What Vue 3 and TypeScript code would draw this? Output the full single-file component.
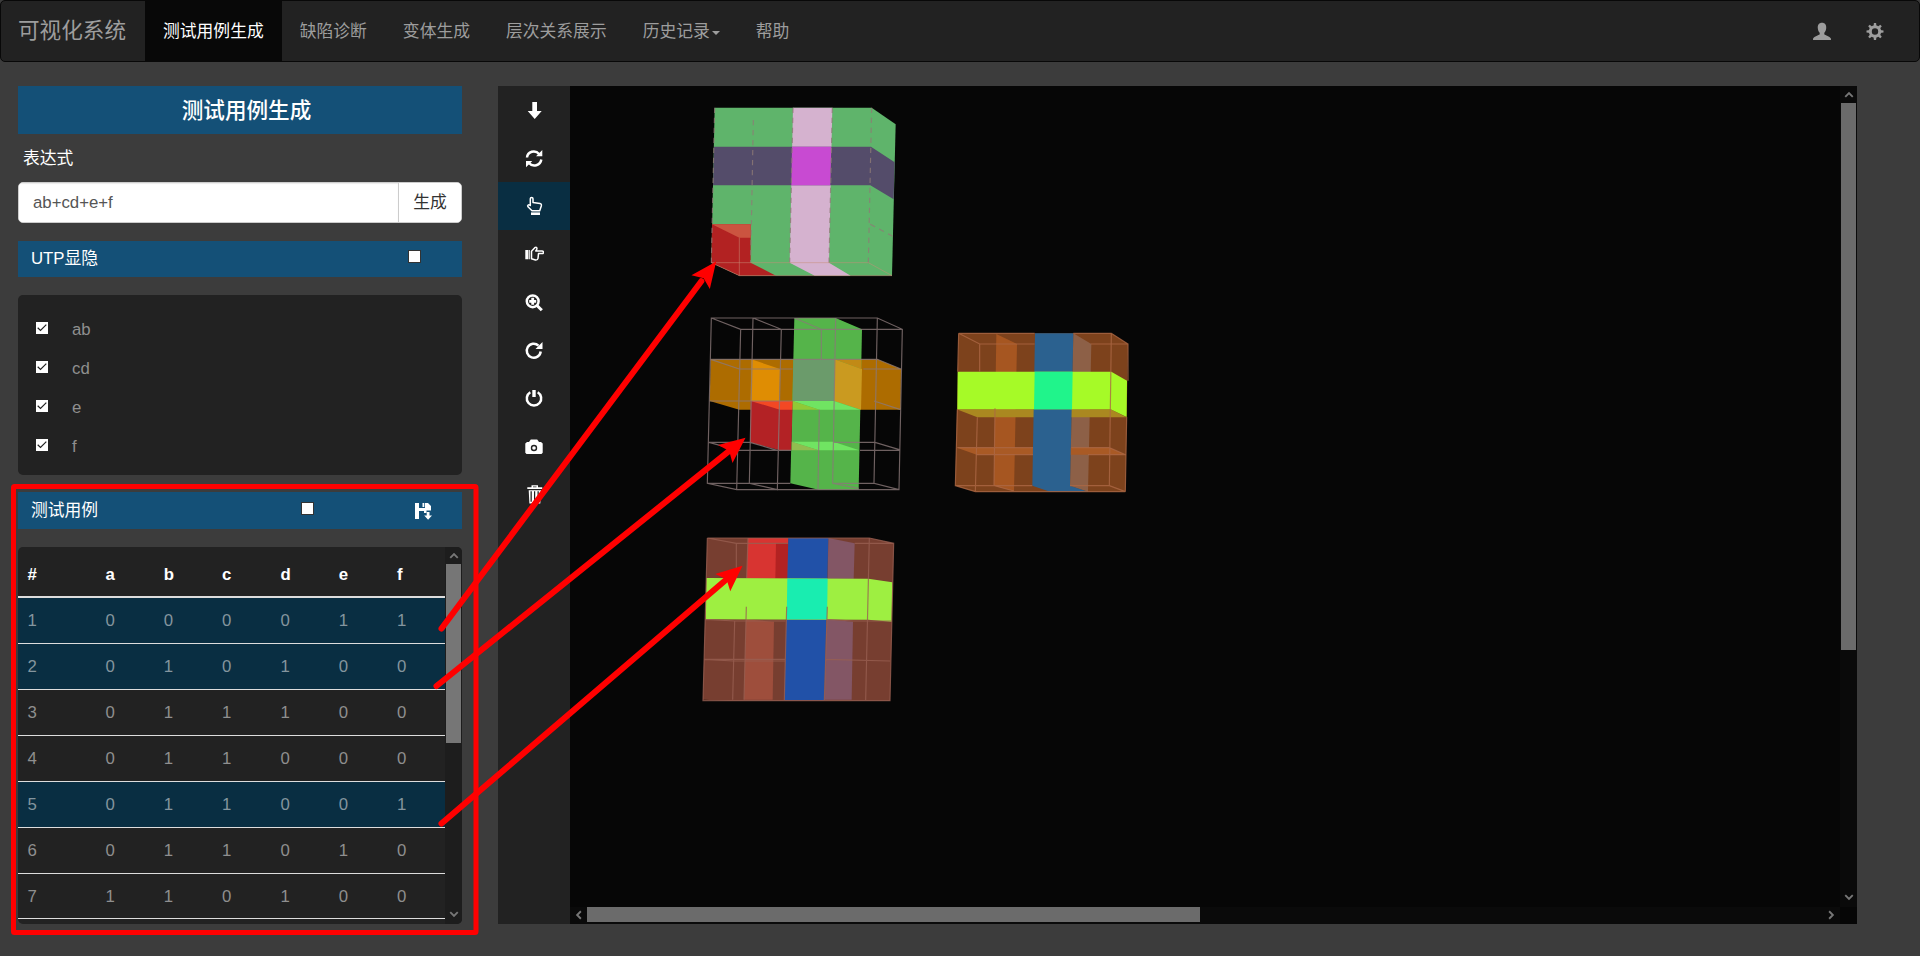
<script setup lang="ts">
import { ref } from 'vue'

interface Face { p: string; c: string }
interface Cube { id: string; x: number; y: number; faces: Face[]; lines: string; stroke: string; dash?: string }

const navItems = ['测试用例生成', '缺陷诊断', '变体生成', '层次关系展示', '历史记录', '帮助']
const terms = ref(['ab', 'cd', 'e', 'f'])
const columns = ['a', 'b', 'c', 'd', 'e', 'f']
const expression = ref('ab+cd+e+f')
const cases = [
  { id: 1, bits: '000011', on: true },
  { id: 2, bits: '010100', on: true },
  { id: 3, bits: '011100', on: false },
  { id: 4, bits: '011000', on: false },
  { id: 5, bits: '011001', on: true },
  { id: 6, bits: '011010', on: false },
  { id: 7, bits: '110100', on: false },
]
const tools = ['down', 'refresh', 'up-hand', 'right-hand', 'zoom', 'repeat', 'power', 'camera', 'trash']
const activeTool = 'up-hand'

// Faces are drawn back to front, three units per screen pixel.
const cubes: Cube[] = [
  {
    id: 'top', x: 690, y: 95, stroke: '#8f7a75', dash: '16 14',
    faces: [
      { p: '74,38 545,38 617,88 606,542 148,542 64,503', c: '#5fb46b' },
      { p: '309,38 427,38 417,503 482,542 374,542 299,503', c: '#d5b2cf' },
      { p: '72,155 543,155 614,202 611,313 541,271 69,271', c: '#544c6a' },
      { p: '306,155 424,155 421,271 304,271', c: '#c84ad2' },
      { p: '66,388 182,388 182,503 258,542 148,542 64,503', c: '#b22222' },
      { p: '66,388 182,388 182,428 148,428', c: '#cb5440' },
    ],
    lines: 'M74 38L64 503M190 75L182 503M309 38L299 503M427 38L417 503M545 38L535 505M541 388L608 424',
  },
  {
    id: 'middle', x: 690, y: 305, stroke: '#8a7878',
    faces: [
      { p: '62,163 562,163 633,192 632,314 148,314 59,288', c: '#ad6c00' },
      { p: '184,163 270,192 268,288 182,288', c: '#df8d03' },
      { p: '313,39 437,39 516,73 506,554 386,554 301,535', c: '#55b44a' },
      { p: '310,163 434,163 432,288 308,288', c: '#6b9b6b' },
      { p: '434,163 516,192 513,314 432,288', c: '#ca9a20' },
      { p: '434,163 514,163 514,192', c: '#c18a16' },
      { p: '182,288 308,288 304,436 270,436 180,412', c: '#b32225' },
      { p: '182,288 308,288 306,314 270,314', c: '#f34824' },
      { p: '308,288 432,288 511,314 388,314', c: '#70e462' },
      { p: '308,288 388,314 308,314', c: '#91c936' },
      { p: '305,410 430,410 508,436 386,436', c: '#70e462' },
      { p: '305,410 386,436 305,436', c: '#91bd50' },
    ],
    lines: 'M64 39H562L637 73L627 554H140L52 535ZM64 39L152 73H637M152 73L140 554M189 39L178 535L262 554L274 73L189 39M313 39L394 73V163M437 39L428 535L506 550M562 39L552 535L627 554M52 535H301M428 535H552M62 163H562L633 192H520M148 192H308M148 192L62 163M59 288H308M552 288L632 314M57 412H180L262 436M57 412L144 436H304M430 412H555L628 434M510 436H628M268 314L262 554M388 314L384 554',
  },
  {
    id: 'right', x: 940, y: 320, stroke: '#ac6845',
    faces: [
      { p: '56,40 514,40 564,72 556,515 106,515 46,497', c: '#7d421c' },
      { p: '169,42 231,72 222,513 162,497', c: '#a65621' },
      { p: '400,40 454,72 444,515 390,497', c: '#8d6047' },
      { p: '51,383 508,383 557,404 110,404', c: '#a95a25' },
      { p: '50,268 512,268 559,292 112,292', c: '#aa8820' },
      { p: '285,40 400,40 390,497 444,515 330,515 277,497', c: '#2b618f' },
      { p: '53,155 514,155 561,182 560,291 512,268 52,268', c: '#a6fa27' },
      { p: '284,155 398,155 396,268 282,268', c: '#20f48b' },
    ],
    lines: 'M56 40H284M400 40H514L564 72M56 40L53 155M52 268L46 497H277M390 497H508L556 515H106L46 497M56 40L119 72H284M119 72V155M112 292L106 515M165 265L162 497L222 513M452 72H564V182M560 291L556 515M514 40L508 497M52 383H279M394 383H508L557 404H444M110 404H279',
  },
  {
    id: 'bottom', x: 690, y: 525, stroke: '#985f51',
    faces: [
      { p: '52,39 538,39 611,55 600,527 115,527 39,524', c: '#773e30' },
      { p: '168,283 252,290 248,524 162,524', c: '#9e4e3c' },
      { p: '410,283 489,290 485,524 403,524', c: '#835665' },
      { p: '415,39 494,55 491,161 413,161', c: '#835665' },
      { p: '174,39 295,39 292,161 170,161', c: '#d83431' },
      { p: '258,54 295,54 292,161 256,161', c: '#b32222' },
      { p: '295,39 415,39 403,526 283,526', c: '#2151a8' },
      { p: '49,159 535,161 607,172 605,290 534,284 47,283', c: '#9eef41' },
      { p: '292,161 413,161 411,283 290,283', c: '#19edb0' },
    ],
    lines: 'M52 39H538L611 55L600 527H39L52 39M52 39L139 55H294M139 55V159M134 288L128 524M174 39L170 159M169 245L162 524M290 245L283 526M412 245L403 526M538 39L527 525M47 283L134 288H286M410 283L490 288H605M43 403H286M406 403L600 408M43 403L130 408H286M494 55H611',
  },
]

const arrows = [
  'M441.5 628.5L715 263',
  'M436.5 686L744 439',
  'M441.5 823.5L741 567',
]
</script>

<template>
  <div class="page">
    <header class="navbar">
      <a class="brand">可视化系统</a>
      <nav class="nav">
        <a v-for="(item, i) in navItems" :key="item" class="nav-item" :class="{ active: i === 0 }">
          {{ item }}<span v-if="item === '历史记录'" class="caret"></span>
        </a>
      </nav>
      <div class="nav-right">
        <svg class="nav-icon" viewBox="0 0 20 20"><path d="M10 1.7c3 0 4.5 2.2 4.2 5.5-.2 2-1 3.600-1.900 4.600v1.500c1 1.200 5.300 1.900 6.600 4.200l.1 1.500H1l.1-1.500c1.300-2.300 5.600-3 6.600-4.200v-1.500C6.700 10.800 6 9.200 5.800 7.200 5.500 3.900 7 1.700 10 1.700Z" fill="currentColor" /></svg>
        <svg class="nav-icon" viewBox="0 0 20 20">
          <circle cx="10" cy="10.500" r="4.700" fill="none" stroke="currentColor" stroke-width="3" />
          <path v-for="n in 8" :key="n" d="M8.500 5.500L8.900 2H11.100L11.500 5.500Z" :transform="`rotate(${n * 45} 10 10.500)`" fill="currentColor" />
        </svg>
      </div>
    </header>

    <main class="main">
      <aside class="sidebar">
        <h1 class="title">测试用例生成</h1>
        <label class="label">表达式</label>
        <div class="input-group">
          <input v-model="expression" class="input" type="text" />
          <button class="button">生成</button>
        </div>
        <div class="bar bar-utp">
          <span>UTP显隐</span>
          <i class="box"></i>
        </div>
        <ul class="panel">
          <li v-for="t in terms" :key="t" class="term">
            <svg class="check" viewBox="0 0 12 12"><rect width="12" height="12" fill="#fff" /><path d="M1.700 5.800L4.500 8.500L10.300 2.700" fill="none" stroke="#222" stroke-width="1.200" /></svg>
            <span>{{ t }}</span>
          </li>
        </ul>
        <div class="bar bar-cases">
          <span>测试用例</span>
          <i class="box"></i>
          <svg class="save" viewBox="0 0 20 20">
            <path d="M1 2H5V7H11V2H14L17 5V9.500H12.500V12H10V10H5V18H1ZM8.500 2H10.300V6H8.500Z" fill="#fff" />
            <path d="M12.700 11H15.500V14.500H18L14.100 18.700L10.200 14.500H12.700Z" fill="#fff" />
          </svg>
        </div>
        <div class="table-wrap">
          <div class="table">
            <div class="row head"><span>#</span><span v-for="c in columns" :key="c">{{ c }}</span></div>
            <div v-for="r in cases" :key="r.id" class="row" :class="{ on: r.on }">
              <span>{{ r.id }}</span><span v-for="(b, i) in r.bits" :key="i">{{ b }}</span>
            </div>
          </div>
          <div class="vbar">
            <svg class="chev" viewBox="0 0 8 6"><path d="M1 4.500L4 1.500L7 4.500" /></svg>
            <div class="thumb"></div>
            <svg class="chev end" viewBox="0 0 8 6"><path d="M1 1.500L4 4.500L7 1.500" /></svg>
          </div>
        </div>
      </aside>

      <section class="workspace">
        <div class="tools">
          <button v-for="t in tools" :key="t" class="tool" :class="{ active: t === activeTool }">
            <svg viewBox="0 0 20 20" class="tool-icon">
              <path v-if="t === 'down'" class="fill" d="M8.300 2H13V11H17.700L10.700 19L3.700 11H8.300Z" />
              <template v-else-if="t === 'refresh'">
                <path class="line" d="M3 9.500C3.500 3.700 11 1.200 15.300 6.200M17.300 11.500C16.500 17.300 9 19.800 5 15" />
                <path class="fill" d="M18.300 2V8.300H12ZM2 19.200V12.900H8.300Z" />
              </template>
              <template v-else-if="t === 'up-hand'">
                <path class="thin" d="M6.300 2.800C6.300 1 9 1 9 2.800V6.500L16 7.500C17.300 7.700 17.600 8.500 17.300 10L15.700 14.700H8L4 10.800C3 9.300 4.500 8 6.300 9.500Z" />
                <path class="fill" d="M7 16.400H16V19H7Z" />
              </template>
              <template v-else-if="t === 'right-hand'">
                <path class="fill" d="M1.300 6H4.500V15.300H1.300ZM5 6H5.800V15.300H5Z" />
                <path class="thin" d="M7.500 7.300L10.800 3.700C12.500 2.500 13.500 4 12.500 5.800L11.800 7H18C20 7 20 9.600 18 9.600H14.500L14 14.500C13.800 15.800 13 16.100 11.500 16L7.500 14.700Z" />
              </template>
              <g v-else-if="t === 'zoom'" transform="translate(0 -.7)">
                <circle cx="8.700" cy="9" r="5.900" class="line" /><path d="M13 13.200L17.800 18" stroke="#fff" stroke-width="3" />
                <path class="fill" d="M7.300 5.500H10.100V7.600H12.200V10.400H10.100V12.500H7.300V10.400H5.200V7.600H7.300Z" />
              </g>
              <g v-else-if="t === 'repeat'" transform="translate(0 -1)">
                <path class="line" d="M14.500 5.600A7 7 0 1 0 16.700 11.500" /><path class="fill" d="M18.500 2V9H11.500Z" />
              </g>
              <g v-else-if="t === 'power'" transform="translate(0 -1)">
                <path class="line" d="M6.300 4.200A7.200 7.200 0 1 0 13.700 4.200" /><path class="fill" d="M8.300 2H11.700V9H8.300Z" />
              </g>
              <path v-else-if="t === 'camera'" class="fill" fill-rule="evenodd" d="M1.300 6.500L3 5H5L6.800 2.500H13.200L15 5H17L18.700 6.500V15.800L17.500 17H2.500L1.300 15.800ZM10 7.800A3.200 3.200 0 1 0 10 14.200A3.200 3.200 0 1 0 10 7.800ZM10 9.200A1.800 1.800 0 1 1 10 12.800A1.800 1.800 0 1 1 10 9.200Z" />
              <path v-else class="fill" transform="translate(0 -.7)" fill-rule="evenodd" d="M3.300 3H7.500V1H14V3H18.300V4.700H3.300ZM9 2.200V3H12.500V2.200ZM4.700 6H17L16.300 19.300H5.400ZM6.500 7V17.500H7.800V7ZM10 7V17.500H11.200V7ZM13.500 7V17.500H14.800V7Z" />
            </svg>
          </button>
        </div>
        <div class="stage">
          <svg class="scene" viewBox="570 86 1270 821">
            <g v-for="c in cubes" :key="c.id" :transform="`translate(${c.x} ${c.y}) scale(.33333)`">
              <polygon v-for="(f, i) in c.faces" :key="i" :points="f.p" :fill="f.c" />
              <path :d="c.lines" fill="none" :stroke="c.stroke" stroke-width="3.500" stroke-opacity=".8" :stroke-dasharray="c.dash" />
              <path v-if="c.id === 'top'" d="M64 503H535L606 542H148L64 503M148 428V542" fill="none" stroke="#c88c79" stroke-width="2.500" stroke-opacity=".6" />
            </g>
          </svg>
          <div class="vbar stage-v">
            <svg class="chev" viewBox="0 0 8 6"><path d="M1 4.500L4 1.500L7 4.500" /></svg>
            <div class="thumb"></div>
            <svg class="chev end" viewBox="0 0 8 6"><path d="M1 1.500L4 4.500L7 1.500" /></svg>
          </div>
          <div class="hbar">
            <svg class="hchev" viewBox="0 0 6 8"><path d="M4.500 1L1.500 4L4.500 7" /></svg>
            <div class="hthumb"></div>
            <svg class="hchev end" viewBox="0 0 6 8"><path d="M1.500 1L4.500 4L1.500 7" /></svg>
          </div>
        </div>
      </section>
    </main>

    <svg class="notes" viewBox="0 0 1920 956">
      <defs>
        <marker id="head" markerUnits="userSpaceOnUse" markerWidth="32" markerHeight="28" refX="28" refY="14" orient="auto">
          <path d="M30 14L4 2.500L9 14L4 25.500Z" fill="#f00" />
        </marker>
      </defs>
      <rect x="13.500" y="486.500" width="462.500" height="446" rx="1" fill="none" stroke="#f00" stroke-width="5" />
      <!-- The shaft stops short of the head so its tip stays sharp. -->
      <g v-for="a in arrows" :key="a">
        <path :d="a" fill="none" stroke="none" marker-end="url(#head)" />
        <path :d="a" fill="none" stroke="#f00" stroke-width="6" stroke-linecap="round" pathLength="100" stroke-dasharray="95 10" />
      </g>
    </svg>
  </div>
</template>

<style>
body { margin: 0; background: #3c3c3c; }
</style>

<style scoped>
* { box-sizing: border-box; }
.page {
  position: relative; width: 1920px; height: 956px; overflow: hidden; background: #3c3c3c;
  font-family: "Liberation Sans", "Noto Sans CJK SC", sans-serif; font-size: 16.8px; line-height: 24px; color: #9d9d9d;
}
.navbar { display: flex; height: 62px; border: 1px solid #080808; border-radius: 5px; background: #222; }
.brand { width: 144px; padding-left: 17px; font-size: 21.6px; line-height: 60px; white-space: nowrap; }
.nav { display: flex; }
.nav-item { display: flex; align-items: center; padding: 1px 18px 0; white-space: nowrap; }
.nav-item.active { background: #080808; color: #fff; }
.caret { margin: 2px 0 0 2px; border: 4.500px solid transparent; border-top-color: #9d9d9d; border-bottom: 0; }
.nav-right { display: flex; align-items: center; gap: 33px; margin-left: auto; padding-right: 34px; }
.nav-icon { width: 20px; height: 20px; color: #9d9d9d; }

.main { display: flex; gap: 36px; padding: 24px 0 0 18px; }
.sidebar { width: 444px; height: 838px; display: flex; flex-direction: column; }
.title { margin: 0; height: 48px; padding-left: 13px; background: #145077; color: #fff; text-align: center; font-size: 21.6px; font-weight: 500; line-height: 49px; }
.label { height: 48px; padding-left: 5px; line-height: 49px; color: #fff; }
.input-group { display: flex; height: 41px; border: 1px solid #ccc; border-radius: 5px; background: #fff; overflow: hidden; }
.input { flex: 1; min-width: 0; padding: 0 14px; border: 0; outline: 0; font: inherit; color: #555; background: #fff; box-shadow: inset 0 1px 1px rgba(0, 0, 0, .08); }
.button { width: 63px; padding: 0; border: 0; border-left: 1px solid #ccc; background: #fff; font: inherit; color: #333; }
.bar { display: flex; flex: none; align-items: flex-start; height: 36px; padding: 4px 0 0 13px; background: #145077; color: #fff; }
.bar span { width: 377px; padding-top: 2px; }
.bar-utp { margin-top: 18px; }
.bar-utp .box { margin: 5px 0 0; }
.box { width: 13px; height: 13px; border: 1px solid #333; background: #fff; }
.panel { flex: none; height: 180px; margin: 18px 0 17px; padding: 15px 18px; list-style: none; border-radius: 5px; background: #222; color: #8f8f8f; }
.term { display: flex; height: 39px; gap: 24px; line-height: 39px; }
.check { width: 12px; height: 12px; margin-top: 12px; }
.bar-cases { height: 37px; }
.bar-cases span { width: 270px; padding-top: 3px; }
.bar-cases .box { margin-top: 6px; }
.save { width: 20px; height: 20px; margin: 5px 0 0 100px; }
.table-wrap { display: flex; height: 377px; margin-top: 18px; border-radius: 5px; background: #222; overflow: hidden; }
.table { width: 427px; }
.row { display: grid; grid-template-columns: 78px repeat(6, 58.300px); height: 46px; padding-left: 9.500px; border-bottom: 1px solid #ddd; line-height: 46px; color: #8f8f8f; }
.row:last-child { height: 45px; }
.row.on { background: #092e42; color: #84959e; }
.row.head { height: 51px; padding-top: 5px; border-bottom-width: 2px; color: #fff; font-weight: 700; }
.vbar { display: flex; flex-direction: column; width: 17px; padding: 0 1px; background: #1d1d1d; }
.chev { width: 10px; height: 8px; margin: 5px 0 4px 2.500px; }
.chev.end { margin: auto 0 6px 2.500px; }
.chev path, .hchev path { fill: none; stroke: #777; stroke-width: 1.500; }
.thumb { height: 179px; background: #767676; }

.workspace { display: flex; width: 1359px; height: 838px; background: #060606; }
.tools { width: 72px; background: #222; }
.tool { display: flex; align-items: center; justify-content: center; width: 72px; height: 48.150px; padding: 0; border: 0; background: none; }
.tool.active { background: #092e42; }
.tool-icon { width: 20px; height: 20px; }
.fill { fill: #fff; }
.line { fill: none; stroke: #fff; stroke-width: 2.500; }
.thin { fill: none; stroke: #fff; stroke-width: 1.500; stroke-linejoin: round; }
.stage { display: grid; grid-template-columns: 1270px 17px; grid-template-rows: 821px 17px; }
.scene { width: 1270px; height: 821px; }
.stage-v { background: #0a0a0a; }
.stage-v .thumb { height: 547px; background: #6b6b6b; }
.hbar { display: flex; align-items: flex-start; background: #0a0a0a; }
.hchev { width: 8px; height: 10px; margin: 3px 4px 0 5px; }
.hchev.end { margin: 3px 5px 0 auto; }
.hthumb { width: 613px; height: 15px; background: #6b6b6b; }
.notes { position: absolute; left: 0; top: 0; width: 1920px; height: 956px; pointer-events: none; }
</style>
